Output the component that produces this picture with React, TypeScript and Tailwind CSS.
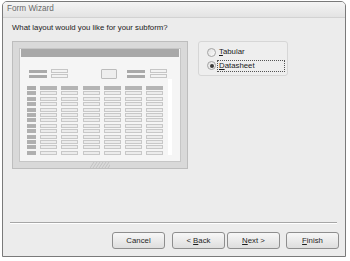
import React from 'react';

const COLS = [0, 1, 2, 3, 4, 5];
const ROWS = Array.from({ length: 12 }, (_, i) => i);

function LabelPair() {
  return (
    <div className="flex flex-col gap-[2px] pt-px">
      <div className="h-[3px] w-[18px] bg-[#a9a9a9]" />
      <div className="h-[3px] w-[18px] bg-[#a9a9a9]" />
    </div>
  );
}

function BoxPair() {
  return (
    <div className="flex flex-col gap-px">
      <div className="h-[4px] w-[17px] border border-[#c6c6c6] bg-[#f2f2f2]" />
      <div className="h-[4px] w-[17px] border border-[#c6c6c6] bg-[#f2f2f2]" />
    </div>
  );
}

// Miniature of the subform layout, drawn with plain boxes.
function LayoutPreview() {
  return (
    <div className="flex h-[128px] w-[176px] flex-col border border-[#bdbdbd] bg-[#d9d9d9] px-[6px] pt-[6px]">
      <div className="flex flex-1 flex-col border border-[#c6c6c6] bg-[#f5f5f5]">
        <div className="mx-px h-[8px] bg-[#a8a8a8]" />
        <div className="ml-[9px] mt-[12px] flex items-start">
          <LabelPair />
          <div className="ml-[4px]">
            <BoxPair />
          </div>
          <div className="ml-[33px] h-[10px] w-[16px] rounded-[1px] border border-[#bcbcbc] bg-[#eeeeee]" />
          <div className="ml-[10px]">
            <LabelPair />
          </div>
          <div className="ml-[5px]">
            <BoxPair />
          </div>
        </div>
        <div className="ml-[7px] mt-[7px] flex">
          <div className="flex flex-col gap-[1.4px]">
            <div className="flex gap-[4.2px]">
              <div className="h-[4px] w-[9px] bg-[#ababab]" />
              {COLS.map((c) => (
                <div key={c} className="h-[4px] w-[17px] bg-[#b4b4b4]" />
              ))}
            </div>
            {ROWS.map((r) => (
              <div key={r} className="flex gap-[4.2px]">
                <div className="h-[4px] w-[9px] bg-[#b0b0b0]" />
                {COLS.map((c) => (
                  <div key={c} className="h-[4px] w-[17px] border border-[#c8c8c8] bg-[#ececec]" />
                ))}
              </div>
            ))}
          </div>
          <div className="-mt-[7px] ml-[5px] w-[4px] bg-white" />
        </div>
      </div>
      <div className="flex h-[6px] justify-center">
        <svg width="20" height="6" viewBox="0 0 20 6" className="block">
          {[0, 3, 6, 9, 12, 15, 18].map((x) => (
            <line key={x} x1={x} y1={6} x2={x + 4} y2={0} stroke="#c2c2c2" strokeWidth="1" />
          ))}
        </svg>
      </div>
    </div>
  );
}

function Radio({ checked }: { checked?: boolean }) {
  return (
    <div className="flex h-[9px] w-[9px] items-center justify-center rounded-full border border-[#a4a4a4] bg-gradient-to-br from-[#e0e0e0] to-[#fafafa]">
      {checked && <div className="h-[4px] w-[4px] rounded-full bg-[#3c3c3c]" />}
    </div>
  );
}

function WizardButton({ children }: { children: React.ReactNode }) {
  return (
    <div className="flex h-[17px] w-[53px] items-center justify-center rounded-[3px] border border-[#8e8e8e] bg-gradient-to-b from-[#f7f7f7] to-[#dedede] text-[7.8px] text-[#1e1e1e]">
      {children}
    </div>
  );
}

export default function App() {
  return (
    <div className="h-[261px] w-[350px] bg-white pl-[2px] pt-px font-['Liberation_Sans',Arial,sans-serif]">
      <div className="flex h-[256px] w-[344px] flex-col overflow-hidden rounded-t-[5px] border border-[#7a7a7a] bg-[#ececec]">
        <div className="flex h-[16px] items-center border-b border-[#d2d2d2] bg-gradient-to-b from-[#f5f5f5] to-[#e3e3e3] pl-[4px] text-[8.2px] text-[#6a6a6a]">
          Form Wizard
        </div>

        <div className="flex flex-1 flex-col">
          <div className="ml-[9px] mt-[5px] text-[7.8px] leading-[10px] text-[#1a1a1a]">
            What layout would you like for your subform?
          </div>

          <div className="ml-[9px] mt-[8px] flex items-start">
            <LayoutPreview />
            <div className="ml-[10px] flex h-[35px] w-[90px] flex-col rounded-[3px] border border-[#d6d6d6] bg-[#eeeeee] pl-[8px] pt-[4px] text-[7.8px] text-[#1a1a1a]">
              <div className="flex h-[12px] items-center gap-[1px]">
                <Radio />
                <span className="border border-transparent px-px leading-[10px]">
                  <span className="underline">T</span>abular
                </span>
              </div>
              <div className="mt-[1px] flex h-[13px] items-center gap-[1px]">
                <Radio checked />
                <span className="flex h-[12px] w-[68px] items-center border border-dotted border-[#555] px-px leading-[10px]">
                  <span className="underline">D</span>atasheet
                </span>
              </div>
            </div>
          </div>

          <div className="ml-[7px] mt-[53px] w-[327px] border-b border-white">
            <div className="h-px bg-[#a6a6a6]" />
          </div>

          <div className="ml-[109px] mt-[8px] flex">
            <WizardButton>Cancel</WizardButton>
            <div className="ml-[7px]">
              <WizardButton>
                &lt; <span className="ml-[2px] underline">B</span>ack
              </WizardButton>
            </div>
            <div className="ml-[2px]">
              <WizardButton>
                <span className="underline">N</span>ext &gt;
              </WizardButton>
            </div>
            <div className="ml-[6px]">
              <WizardButton>
                <span className="underline">F</span>inish
              </WizardButton>
            </div>
          </div>
        </div>
      </div>
    </div>
  );
}
